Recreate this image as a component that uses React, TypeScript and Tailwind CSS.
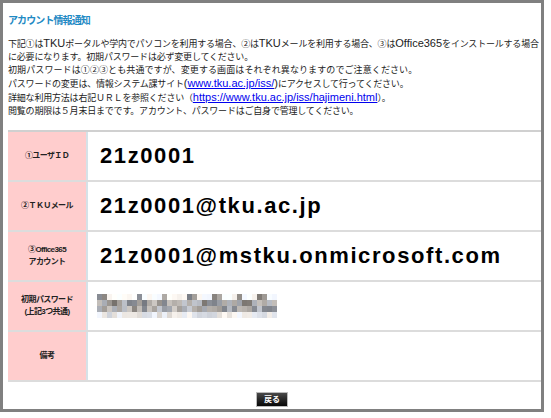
import React from "react";

const JP = '"Liberation Sans", "Noto Sans CJK JP", sans-serif';

function Mosaic() {
  const cols = 36;
  const cw = 5;
  const ch = 6;
  let seed = 7;
  const rnd = () => {
    seed = (seed * 9301 + 49297) % 233280;
    return seed / 233280;
  };
  const asc = [0, 1, 8, 13, 18, 19, 23, 24, 28, 32, 33];
  const rects: React.ReactElement[] = [];
  for (let c = 0; c < cols; c++) {
    for (let r = 0; r < 4; r++) {
      let d: number;
      if (r === 0) d = asc.includes(c) ? 0.45 + rnd() * 0.3 : rnd() * 0.12;
      else if (r === 1) d = 0.3 + rnd() * 0.45;
      else if (r === 2) d = 0.25 + rnd() * 0.4;
      else d = 0.05 + rnd() * 0.2;
      const v = Math.round(255 - d * 200);
      const tint = rnd() > 0.5;
      const fill = tint
        ? `rgb(${v},${Math.min(255, v + 4)},${Math.min(255, v + 12)})`
        : `rgb(${Math.min(255, v + 10)},${Math.min(255, v + 5)},${v})`;
      rects.push(<rect key={`${c}-${r}`} x={c * cw} y={r * ch} width={cw} height={ch} fill={fill} />);
    }
  }
  return (
    <svg width={cols * cw} height={4 * ch} viewBox={`0 0 ${cols * cw} ${4 * ch}`} shapeRendering="crispEdges">
      {rects}
    </svg>
  );
}

function Row({ label, children }: { label: React.ReactNode; children?: React.ReactNode }) {
  return (
    <div className="flex h-[50px] border-b-2 border-[#dcdcdc]">
      <div className="w-[80px] shrink-0 bg-[#ffcdcd] border-r-2 border-[#d6e2e8] flex items-center justify-center text-center text-[8px] tracking-[-0.6px] leading-[12px] font-bold text-[#222]">
        <div>{label}</div>
      </div>
      <div className="flex-1 flex items-center pl-[12px] bg-white">{children}</div>
    </div>
  );
}

function Val({ children }: { children: React.ReactNode }) {
  return (
    <span
      className="text-[22px] font-bold text-black tracking-[1.6px] leading-none"
      style={{ fontFamily: '"Liberation Sans", Arial, sans-serif' }}
    >
      {children}
    </span>
  );
}

function L({ children, link }: { children: React.ReactNode; link?: boolean }) {
  return (
    <span className={link ? "text-[11px] tracking-normal text-[#0000ee] underline" : "text-[11px] tracking-normal"}>
      {children}
    </span>
  );
}

export default function App() {
  return (
    <div className="w-[551px] h-[418px] bg-white" style={{ fontFamily: JP }}>
      <div className="w-[544px] h-[412px] border-[3px] border-[#808080] pl-[5px] pt-[11px] overflow-hidden">
        <div className="text-[10px] tracking-[-0.9px] leading-[13px] font-bold text-[#1f8ac4]">アカウント情報通知</div>
        <div className="mt-[10px] text-[9px] tracking-[-0.2px] leading-[13px] text-[#222] whitespace-nowrap">
          <div>
            下記①は<L>TKU</L>ポータルや学内でパソコンを利用する場合、②は<L>TKU</L>メールを利用する場合、③は<L>Office365</L>をインストールする場合
          </div>
          <div>に必要になります。初期パスワードは必ず変更してください。</div>
          <div className="tracking-[0.1px]">初期パスワードは①②③とも共通ですが、変更する画面はそれぞれ異なりますのでご注意ください。</div>
          <div>
            パスワードの変更は、情報システム課サイト<L>(</L>
            <L link>www.tku.ac.jp/iss/</L>
            <L>)</L>にアクセスして行ってください。
          </div>
          <div>
            詳細な利用方法は右記ＵＲＬを参照ください（
            <L link>https://www.tku.ac.jp/iss/hajimeni.html</L>
            ）。
          </div>
          <div>閲覧の期限は５月末日までです。アカウント、パスワードはご自身で管理してください。</div>
        </div>
        <div className="mt-[12px] border-t-2 border-[#d0d0d0]">
          <Row label="①ユーザＩＤ">
            <Val>21z0001</Val>
          </Row>
          <Row label="②ＴＫＵメール">
            <Val>21z0001@tku.ac.jp</Val>
          </Row>
          <Row
            label={
              <>
                ③Office365
                <br />
                アカウント
              </>
            }
          >
            <Val>21z0001@mstku.onmicrosoft.com</Val>
          </Row>
          <Row
            label={
              <>
                初期パスワード
                <br />
                (上記3つ共通)
              </>
            }
          >
            <div className="-ml-[3px]">
              <Mosaic />
            </div>
          </Row>
          <Row label="備考" />
        </div>
        <div className="flex justify-center mt-[10px] pr-[5px]">
          <div className="w-[32px] h-[15px] bg-gradient-to-b from-[#4a4a4a] to-[#080808] border border-[#bbb] text-white text-[8px] leading-[13px] text-center font-bold">
            戻る
          </div>
        </div>
      </div>
    </div>
  );
}
